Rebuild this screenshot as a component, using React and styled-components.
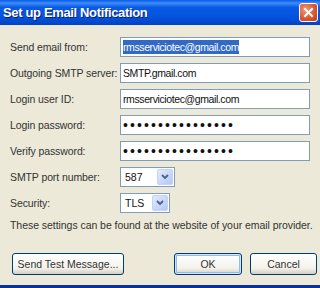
import React from "react";
import styled, { createGlobalStyle } from "styled-components";

const Global = createGlobalStyle`
  html, body { margin: 0; padding: 0; background: #ece9d8; }
  body { font-family: Tahoma, "Liberation Sans", Arial, sans-serif; }
`;

const Window = styled.div`
  width: 320px;
  height: 288px;
  display: flex;
  flex-direction: column;
  background: #ece9d8;
  overflow: hidden;
  border-bottom: 3px solid #0831a0;
  box-sizing: border-box;
`;

const TitleBar = styled.div`
  height: 25px;
  flex: none;
  display: flex;
  align-items: center;
  justify-content: space-between;
  padding: 0 2px 0 3px;
  background: linear-gradient(#0a5bea 0%, #3d8cf7 12%, #0a5ae6 30%, #0453dc 70%, #0241c4 100%);
`;

const Title = styled.span`
  color: #fff;
  font-family: "Liberation Sans", Arial, sans-serif;
  font-weight: bold;
  font-size: 13px;
  letter-spacing: -0.35px;
  text-shadow: 1px 1px 0 #0a1e6e;
`;

const CloseButton = styled.div`
  width: 19px;
  height: 19px;
  border: 1px solid #fff;
  border-radius: 3px;
  box-sizing: border-box;
  background: radial-gradient(circle at 35% 35%, #f09a7a, #d8532d 60%, #c23d1a);
  display: flex;
  align-items: center;
  justify-content: center;
`;

const Body = styled.div`
  flex: 1;
  display: flex;
  flex-direction: column;
  padding: 12px 3px 0 10px;
`;

const Form = styled.div`
  display: grid;
  grid-template-columns: 110px 190px;
  row-gap: 6px;
  align-items: center;
`;

const Label = styled.label`
  font-size: 10.5px;
  color: #333;
  white-space: nowrap;
  letter-spacing: -0.1px;
`;

const TextBox = styled.div`
  height: 20px;
  box-sizing: border-box;
  border: 1px solid #7f9db9;
  background: #fff;
  display: flex;
  align-items: center;
  padding-left: 2px;
  font-size: ${(p) => (p.$secret ? "14px" : "10.5px")};
  color: #111;
  letter-spacing: ${(p) => (p.$secret ? "2.1px" : "-0.4px")};
`;

const Selected = styled.span`
  background: #316ac5;
  color: #fff;
  padding: 1px 0;
`;

const Combo = styled.div`
  width: ${(p) => p.$w}px;
  height: 20px;
  box-sizing: border-box;
  border: 1px solid #7f9db9;
  background: #fff;
  display: flex;
  align-items: center;
  justify-content: space-between;
  padding: 1px 1px 1px 4px;
  font-size: 10.5px;
  color: #111;
`;

const ComboArrow = styled.div`
  width: 16px;
  height: 16px;
  border-radius: 2px;
  background: linear-gradient(135deg, #e1eafe, #b4c8f6);
  border: 1px solid #c3d3fd;
  box-sizing: border-box;
  display: flex;
  align-items: center;
  justify-content: center;
`;

const Note = styled.p`
  margin: 6px 0 0;
  font-size: 10.5px;
  color: #333;
  white-space: nowrap;
  letter-spacing: -0.05px;
`;

const ButtonRow = styled.div`
  display: flex;
  align-items: center;
  margin-top: 22px;
  padding-left: 2px;
`;

const Button = styled.button`
  width: ${(p) => p.$w}px;
  height: 22px;
  margin-left: ${(p) => p.$gap || 0}px;
  border: 1px solid #003c74;
  border-radius: 3px;
  background: linear-gradient(#ffffff, #f3f2ec 70%, #d6d0c5);
  font-family: Tahoma, "Liberation Sans", Arial, sans-serif;
  font-size: 10.5px;
  color: #333;
  padding: 0;
  box-shadow: ${(p) =>
    p.$default ? "inset 0 0 0 1px #cee7ff, inset 0 0 0 2px #98b8ea" : "none"};
`;

const Chevron = () => (
  <svg width="8" height="6" viewBox="0 0 8 6">
    <path d="M1 1 L4 4 L7 1" fill="none" stroke="#4d6185" strokeWidth="1.8" />
  </svg>
);

const CloseX = () => (
  <svg width="11" height="11" viewBox="0 0 11 11">
    <path d="M2 2 L9 9 M9 2 L2 9" stroke="#fff" strokeWidth="2" strokeLinecap="square" />
  </svg>
);

export default function App() {
  return (
    <Window>
      <Global />
      <TitleBar>
        <Title>Set up Email Notification</Title>
        <CloseButton>
          <CloseX />
        </CloseButton>
      </TitleBar>
      <Body>
        <Form>
          <Label>Send email from:</Label>
          <TextBox>
            <Selected>rmsserviciotec@gmail.com</Selected>
          </TextBox>
          <Label>Outgoing SMTP server:</Label>
          <TextBox>SMTP.gmail.com</TextBox>
          <Label>Login user ID:</Label>
          <TextBox>rmsserviciotec@gmail.com</TextBox>
          <Label>Login password:</Label>
          <TextBox $secret>••••••••••••••••</TextBox>
          <Label>Verify password:</Label>
          <TextBox $secret>••••••••••••••••</TextBox>
          <Label>SMTP port number:</Label>
          <Combo $w={55}>
            587
            <ComboArrow>
              <Chevron />
            </ComboArrow>
          </Combo>
          <Label>Security:</Label>
          <Combo $w={50}>
            TLS
            <ComboArrow>
              <Chevron />
            </ComboArrow>
          </Combo>
        </Form>
        <Note>These settings can be found at the website of your email provider.</Note>
        <ButtonRow>
          <Button $w={112}>Send Test Message...</Button>
          <Button $w={68} $gap={50} $default>
            OK
          </Button>
          <Button $w={67} $gap={8}>
            Cancel
          </Button>
        </ButtonRow>
      </Body>
    </Window>
  );
}
